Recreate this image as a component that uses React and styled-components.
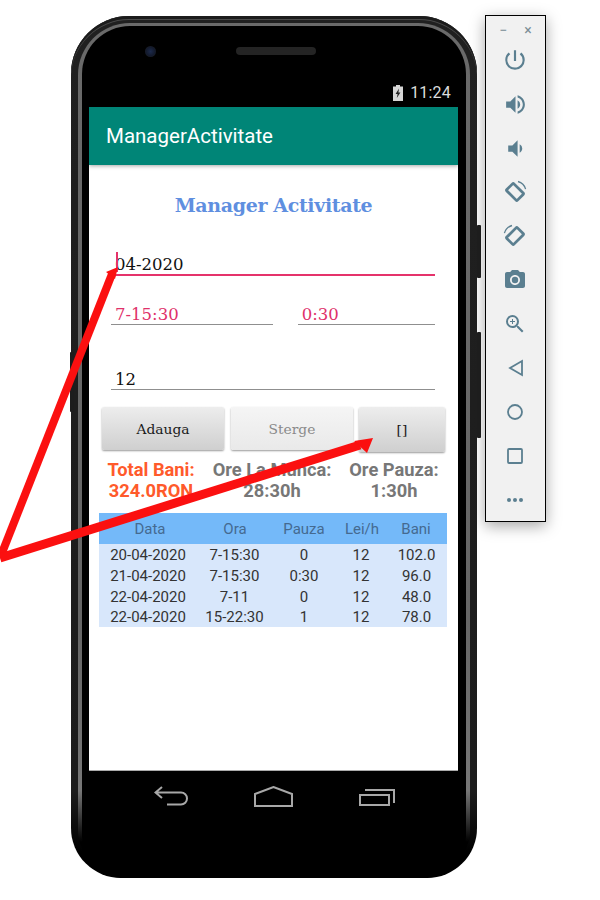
import React from 'react';
import styled, { createGlobalStyle } from 'styled-components';
import { MdPowerSettingsNew, MdVolumeUp, MdVolumeDown, MdPhotoCamera, MdZoomIn } from 'react-icons/md';

const Global = createGlobalStyle`
  html, body { margin: 0; padding: 0; background: #fff; }
  body { font-family: Roboto, "Liberation Sans", sans-serif; }
`;

const Page = styled.div`
  position: relative;
  width: 600px;
  height: 900px;
  overflow: hidden;
  display: flex;
  align-items: flex-start;
  padding: 15px 0 0 71px;
  box-sizing: border-box;
  gap: 8px;
`;

const Phone = styled.div`
  position: relative;
  isolation: isolate;
  width: 406px;
  height: 862px;
  margin-top: 1px;
  flex: none;
  box-sizing: border-box;
  padding: 0 19px 0 18px;
  display: flex;
  flex-direction: column;
  background: linear-gradient(#202020 0, #1c1c1c 90%, #000 97%);
  border-radius: 58px 58px 50px 50px;
  box-shadow: inset 0 3px 0 #1c1c1c, inset 0 4px 0 #4a4a4a;

  /* metal rim, fades out towards the chin */
  &::before {
    content: '';
    position: absolute;
    inset: 7px 7px 2px 7px;
    z-index: -2;
    border-radius: 52px 52px 46px 46px;
    background: linear-gradient(#6a6a6a 0, #666 70%, #777 90%, #000 96%);
  }
  &::after {
    content: '';
    position: absolute;
    inset: 10px 11px 0 11px;
    z-index: -1;
    border-radius: 48px 48px 42px 42px;
    background: #000;
  }
`;

const SideKey = styled.div`
  position: absolute;
  top: ${p => p.$top}px;
  height: ${p => p.$height}px;
  ${p => (p.$left ? 'left: -1px;' : 'right: -4px;')}
  width: 4px;
  background: #1d1d1d;
  border-radius: 1px;
`;

const TopBezel = styled.div`
  height: 91px;
  flex: none;
  display: flex;
  flex-direction: column;
`;

const SensorRow = styled.div`
  height: 62px;
  flex: none;
  display: flex;
  align-items: center;
  padding: 2px 0 0 56px;
  box-sizing: border-box;
  margin-top: 3px;
`;

const Camera = styled.div`
  width: 11px;
  height: 11px;
  border-radius: 50%;
  background: radial-gradient(circle, #1c2a4c 0%, #131a2c 55%, #202020 100%);
`;

const Speaker = styled.div`
  width: 80px;
  height: 8px;
  margin-left: 80px;
  border-radius: 4px;
  background: #242424;
`;

const StatusRow = styled.div`
  flex: 1;
  display: flex;
  align-items: center;
  justify-content: flex-end;
  gap: 7px;
  padding: 0 7px 3px 0;
`;

const Clock = styled.span`
  font-size: 16px;
  color: #dcdcdc;
  letter-spacing: 0.2px;
`;

const Toolbar = styled.div`
  height: 58px;
  flex: none;
  display: flex;
  align-items: center;
  padding-left: 17px;
  background: #008577;
  color: #fff;
  font-size: 20.5px;
  box-shadow: 0 1px 4px rgba(0, 0, 0, 0.35);
  position: relative;
`;

const Content = styled.div`
  height: 606px;
  flex: none;
  background: #fff;
  display: flex;
  flex-direction: column;
  border-bottom: 1px solid #aaa;
  box-sizing: border-box;
`;

const Heading = styled.h1`
  margin: 28px 0 0 0;
  height: 26px;
  line-height: 24px;
  text-align: center;
  font-family: "DejaVu Serif", serif;
  font-size: 19px;
  font-weight: 700;
  letter-spacing: -0.35px;
  color: #5f8fe0;
`;

const FieldRow = styled.div`
  display: flex;
  gap: 25px;
  margin: ${p => p.$top}px 23px 0 22px;
`;

const Field = styled.div`
  position: relative;
  box-sizing: border-box;
  height: 26px;
  flex: ${p => p.$grow || 1} 1 0;
  padding-left: 4px;
  font-family: "DejaVu Serif", serif;
  font-size: 16.5px;
  line-height: ${p => (p.$focused ? '30px' : '31px')};
  white-space: nowrap;
  color: ${p => (p.$pink ? '#e0316a' : '#111')};
  border-bottom: ${p => (p.$focused ? '2px solid #e5336b' : '1px solid #8f8f8f')};
`;

const Caret = styled.span`
  position: absolute;
  left: 5px;
  top: 2px;
  width: 1.5px;
  height: 20px;
  background: #e5336b;
`;

const ButtonRow = styled.div`
  display: flex;
  align-items: flex-start;
  margin: 17px 13px 0 13px;
  gap: 7px;
`;

const Btn = styled.button`
  width: ${p => p.$width}px;
  height: ${p => p.$height || 43}px;
  margin-left: ${p => p.$gap || 0}px;
  border: none;
  border-radius: 2px;
  padding: 0;
  font-family: "DejaVu Serif", serif;
  font-size: 13.8px;
  color: ${p => (p.$disabled ? '#8a8a8a' : '#1a1a1a')};
  background: ${p => (p.$disabled
    ? 'linear-gradient(#f5f5f5, #e9e9e9)'
    : 'linear-gradient(#ededed, #cfcfcf)')};
  box-shadow: 0 1px 2px rgba(0, 0, 0, 0.4);
`;

const Stats = styled.div`
  display: grid;
  grid-template-columns: 104px 138px 106px;
  margin: 7px 0 0 10px;
  font-size: 18.3px;
  font-weight: 700;
  line-height: 21px;
  text-align: center;
  white-space: nowrap;
`;

const Stat = styled.div`
  color: ${p => (p.$accent ? '#ff5a2b' : '#777')};
`;

const Table = styled.div`
  margin: 12px 11px 0 10px;
  font-size: 15px;
`;

const Row = styled.div`
  display: grid;
  grid-template-columns: 98px 75px 64px 50px 61px;
  height: 20.8px;
  line-height: 22.5px;
  text-align: center;
  color: #333;
  background: #d8e7fb;
`;

const HeaderRow = styled(Row)`
  grid-template-columns: 102px 68px 70px 46px 62px;
  height: 31px;
  line-height: 32px;
  color: #456a90;
  background: #74b9f9;
`;

const NavBar = styled.div`
  flex: 1;
  display: flex;
  align-items: flex-start;
  padding: 15px 0 0 65px;
  color: #a8a8a8;
`;

const NavIcon = styled.svg`
  display: block;
  margin-right: ${p => p.$after || 0}px;
  fill: none;
  stroke: currentColor;
  stroke-width: 2;
`;

const Panel = styled.div`
  width: 61px;
  height: 507px;
  flex: none;
  box-sizing: border-box;
  border: 1px solid #000;
  background: #f1f1f1;
  box-shadow: 0 4px 14px rgba(0, 0, 0, 0.35);
  color: #5b7f90;
  display: flex;
  flex-direction: column;
  align-items: center;
`;

const WindowBar = styled.div`
  height: 22px;
  width: 100%;
  flex: none;
  display: flex;
  align-items: center;
  justify-content: center;
  gap: 17px;
  padding-top: 5px;
  box-sizing: border-box;
  color: #7b8d96;
  font-size: 14px;
`;

const ToolButton = styled.div`
  height: 44px;
  width: 100%;
  flex: none;
  display: flex;
  align-items: center;
  justify-content: center;
  font-size: ${p => p.$size || 24}px;
  padding-right: 1px;
  box-sizing: border-box;
`;

const Overlay = styled.svg`
  position: absolute;
  left: 0;
  top: 0;
  pointer-events: none;
`;

const columns = ['Data', 'Ora', 'Pauza', 'Lei/h', 'Bani'];
const rows = [
  ['20-04-2020', '7-15:30', '0', '12', '102.0'],
  ['21-04-2020', '7-15:30', '0:30', '12', '96.0'],
  ['22-04-2020', '7-11', '0', '12', '48.0'],
  ['22-04-2020', '15-22:30', '1', '12', '78.0'],
];

const RotateLeft = () => (
  <svg width="24" height="24" viewBox="0 0 24 24" fill="none" stroke="currentColor">
    <rect x="4.5" y="7" width="15" height="10" rx="1" strokeWidth="2.8" transform="rotate(45 12 12)" />
    <path d="M15 1.5a11 11 0 0 1 7.6 7.6" strokeWidth="1.3" />
  </svg>
);

const RotateRight = () => (
  <svg width="24" height="24" viewBox="0 0 24 24" fill="none" stroke="currentColor">
    <rect x="4.5" y="7" width="15" height="10" rx="1" strokeWidth="2.8" transform="rotate(-45 12 12)" />
    <path d="M9 1.5a11 11 0 0 0 -7.6 7.6" strokeWidth="1.3" />
  </svg>
);

const Outline = ({ children }) => (
  <svg width="24" height="24" viewBox="0 0 24 24" fill="none" stroke="currentColor" strokeWidth="1.8">
    {children}
  </svg>
);

export default function App() {
  return (
    <Page>
      <Global />
      <Phone>
        <SideKey $left $top={336} $height={60} />
        <SideKey $top={209} $height={53} />
        <SideKey $top={316} $height={106} />
        <TopBezel>
          <SensorRow>
            <Camera />
            <Speaker />
          </SensorRow>
          <StatusRow>
            <svg width="10" height="16" viewBox="0 0 10 16">
              <path d="M3 0h4v1.5h3V16H0V1.5h3z" fill="#d6d6d6" />
              <path d="M6 3.5 2.6 9h2l-.8 4L7.4 7.5h-2z" fill="#222" />
            </svg>
            <Clock>11:24</Clock>
          </StatusRow>
        </TopBezel>
        <Toolbar>ManagerActivitate</Toolbar>
        <Content>
          <Heading>Manager Activitate</Heading>
          <FieldRow $top={31}>
            <Field $focused>
              <Caret />
              04-2020
            </Field>
          </FieldRow>
          <FieldRow $top={23}>
            <Field $pink $grow={162}>7-15:30</Field>
            <Field $pink $grow={137}>0:30</Field>
          </FieldRow>
          <FieldRow $top={39}>
            <Field>12</Field>
          </FieldRow>
          <ButtonRow>
            <Btn $width={122}>Adauga</Btn>
            <Btn $width={122} $disabled>Sterge</Btn>
            <Btn $width={86} $height={45} $gap={-1}>[]</Btn>
          </ButtonRow>
          <Stats>
            <Stat $accent>Total Bani:<br />324.0RON</Stat>
            <Stat>Ore La Munca:<br />28:30h</Stat>
            <Stat>Ore Pauza:<br />1:30h</Stat>
          </Stats>
          <Table>
            <HeaderRow>
              {columns.map(c => <div key={c}>{c}</div>)}
            </HeaderRow>
            {rows.map((r, i) => (
              <Row key={i}>
                {r.map((v, j) => <div key={j}>{v}</div>)}
              </Row>
            ))}
          </Table>
        </Content>
        <NavBar>
          <NavIcon $after={66} width="34" height="20" viewBox="0 0 34 20">
            <path d="M8 1 1.5 6.5 8 12M2 6.5h25a5.5 5.5 0 0 1 0 12H13" />
          </NavIcon>
          <NavIcon $after={66} width="39" height="21" viewBox="0 0 39 21">
            <path d="M1 8 19.5 1 38 8v12H1z" />
          </NavIcon>
          <NavIcon width="36" height="20" viewBox="0 0 36 20">
            <path d="M1 9h29v10H1zM6 4h26v1M6 4h29v13" />
          </NavIcon>
        </NavBar>
      </Phone>
      <Panel>
        <WindowBar>
          <span>−</span>
          <span>×</span>
        </WindowBar>
        <ToolButton $size={26}><MdPowerSettingsNew /></ToolButton>
        <ToolButton $size={25}><MdVolumeUp /></ToolButton>
        <ToolButton $size={25}><MdVolumeDown /></ToolButton>
        <ToolButton><RotateLeft /></ToolButton>
        <ToolButton><RotateRight /></ToolButton>
        <ToolButton><MdPhotoCamera /></ToolButton>
        <ToolButton><MdZoomIn /></ToolButton>
        <ToolButton>
          <Outline><path d="M19 5v14L7 12z" /></Outline>
        </ToolButton>
        <ToolButton>
          <Outline><circle cx="12" cy="12" r="7" /></Outline>
        </ToolButton>
        <ToolButton>
          <Outline><rect x="5" y="5" width="14" height="14" rx="1" /></Outline>
        </ToolButton>
        <ToolButton>
          <svg width="24" height="24" viewBox="0 0 24 24" fill="currentColor">
            <circle cx="6" cy="12" r="2" />
            <circle cx="12" cy="12" r="2" />
            <circle cx="18" cy="12" r="2" />
          </svg>
        </ToolButton>
      </Panel>
      <Overlay width="600" height="900" viewBox="0 0 600 900">
        <path d="M0 558 112 274" stroke="#fb1010" strokeWidth="8" fill="none" />
        <path d="M0 558 360 445" stroke="#fb1010" strokeWidth="9" fill="none" />
        <path d="M118 267 106 272 115 279z" fill="#fb1010" />
        <path d="M373 438 354 441 367 453z" fill="#fb1010" />
      </Overlay>
    </Page>
  );
}
